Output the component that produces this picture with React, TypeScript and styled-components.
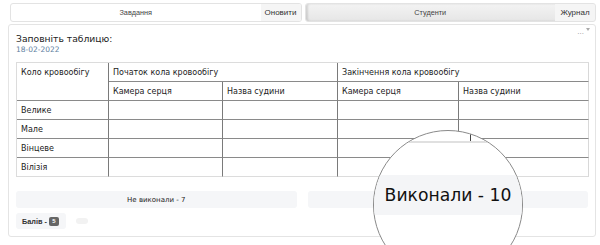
import React from "react";
import styled, { createGlobalStyle } from "styled-components";

const Global = createGlobalStyle`
  html, body { margin: 0; padding: 0; background: #fff; }
  body { font-family: "DejaVu Sans", Verdana, sans-serif; color: #222; }
`;

const Page = styled.div`
  position: relative;
  width: 600px;
  height: 245px;
  padding: 3px 4px 0 8px;
  box-sizing: border-box;
  overflow: hidden;
`;

const TabBar = styled.div`
  display: flex;
  gap: 3px;
  height: 19px;
  margin: 0 0 0 2px;
`;

const Segment = styled.div<{ $inset?: boolean }>`
  flex: 1;
  display: flex;
  border: 1px solid #e3e3e3;
  border-radius: 3px;
  overflow: hidden;
  background: ${(p) => (p.$inset ? "linear-gradient(#f3f3f3, #e6e6e6)" : "#fff")};
  box-shadow: ${(p) => (p.$inset ? "inset 2px 0 2px rgba(0,0,0,0.12)" : "none")};
`;

const TabLabel = styled.div`
  flex: 1;
  display: flex;
  align-items: center;
  justify-content: center;
  font-family: "Liberation Sans", Arial, sans-serif;
  font-size: 7.3px;
  color: #444;
`;

const TabButton = styled.div`
  width: 40px;
  display: flex;
  align-items: center;
  justify-content: center;
  background: #f5f5f5;
  font-family: "Liberation Sans", Arial, sans-serif;
  font-size: 8px;
  color: #333;
`;

const Card = styled.div`
  position: relative;
  margin-top: 2px;
  height: 213px;
  box-sizing: border-box;
  border: 1px solid #e4e4e4;
  border-radius: 3px;
  padding: 8px 7px 0 7px;
`;

const Menu = styled.div`
  position: absolute;
  right: 5px;
  top: 3px;
  display: flex;
  align-items: flex-start;
  gap: 2px;
  font-size: 7px;
  color: #999;
  line-height: 8px;
`;

const Caret = styled.span`
  width: 0;
  height: 0;
  border-left: 2.5px solid transparent;
  border-right: 2.5px solid transparent;
  border-top: 3px solid #aaa;
`;

const Title = styled.div`
  font-size: 9.2px;
  line-height: 12px;
  color: #222;
`;

const DateText = styled.div`
  font-size: 7.5px;
  line-height: 10px;
  color: #5f7f9f;
`;

const Table = styled.table`
  margin-top: 7px;
  width: 572px;
  table-layout: fixed;
  border-collapse: separate;
  border-spacing: 0;
  border-top: 1px solid #dcdcdc;
  border-left: 1px solid #dcdcdc;
  font-size: 8px;
  color: #222;

  td {
    height: 19px;
    padding: 0 0 0 4px;
    box-sizing: border-box;
    border-right: 1px solid #7a7a7a;
    border-bottom: 1px solid #8a8a8a;
    vertical-align: middle;
    white-space: nowrap;
  }
  td.last {
    border-right-color: #d8d8d8;
  }
  tbody tr:last-child td {
    border-bottom-color: #dcdcdc;
  }
  td.top {
    vertical-align: top;
    padding-top: 5px;
  }
`;

const ResultRow = styled.div`
  display: flex;
  gap: 11px;
  margin-top: 14px;
`;

const ResultButton = styled.div`
  flex: 1;
  height: 17px;
  display: flex;
  align-items: center;
  justify-content: center;
  background: #f5f6f8;
  border-radius: 3px;
  font-size: 7px;
  color: #222;
`;

const ScoreRow = styled.div`
  display: flex;
  align-items: center;
  gap: 10px;
  margin-top: 5px;
`;

const ScorePill = styled.div`
  height: 16px;
  display: flex;
  align-items: center;
  gap: 2px;
  padding: 0 7px 0 6px;
  background: #f5f6f8;
  border-radius: 3px;
  font-family: "Liberation Sans", Arial, sans-serif;
  font-weight: bold;
  font-size: 7.3px;
  color: #333;
`;

const Badge = styled.span`
  display: inline-flex;
  align-items: center;
  justify-content: center;
  width: 10px;
  height: 9px;
  border-radius: 2px;
  background: #666;
  color: #fff;
  font-size: 6px;
`;

const Faded = styled.div`
  width: 12px;
  height: 6px;
  border-radius: 3px;
  background: #f2f2f2;
`;

const Magnifier = styled.div`
  position: absolute;
  left: 373px;
  top: 130px;
  width: 150px;
  height: 150px;
  box-sizing: border-box;
  border-radius: 50%;
  border: 1px solid #8a8a8a;
  background: #fff;
  overflow: hidden;
  display: flex;
  flex-direction: column;
`;

const MagTop = styled.div`
  height: 10px;
  flex: none;
  border-bottom: 2px solid #e0e0e0;
  display: flex;
`;

const MagTick = styled.div`
  width: 1px;
  height: 100%;
  margin-left: 96px;
  background: #444;
`;

const MagBand = styled.div`
  margin-top: 32px;
  height: 40px;
  flex: none;
  background: #f4f5f7;
  display: flex;
  align-items: center;
  justify-content: center;
  font-size: 17.2px;
  color: #111;
`;

export default function App() {
  const rows = ["Велике", "Мале", "Вінцеве", "Вілізія"];
  return (
    <>
      <Global />
      <Page>
        <TabBar>
          <Segment>
            <TabLabel>Завдання</TabLabel>
            <TabButton>Оновити</TabButton>
          </Segment>
          <Segment $inset>
            <TabLabel>Студенти</TabLabel>
            <TabButton>Журнал</TabButton>
          </Segment>
        </TabBar>
        <Card>
          <Menu>
            <span>...</span>
            <Caret />
          </Menu>
          <Title>Заповніть таблицю:</Title>
          <DateText>18-02-2022</DateText>
          <Table>
            <colgroup>
              <col style={{ width: 92 }} />
              <col style={{ width: 114 }} />
              <col style={{ width: 115 }} />
              <col style={{ width: 121 }} />
              <col style={{ width: 130 }} />
            </colgroup>
            <thead>
              <tr>
                <td rowSpan={2} className="top">Коло кровообігу</td>
                <td colSpan={2}>Початок кола кровообігу</td>
                <td colSpan={2} className="last">Закінчення кола кровообігу</td>
              </tr>
              <tr>
                <td>Камера серця</td>
                <td>Назва судини</td>
                <td>Камера серця</td>
                <td className="last">Назва судини</td>
              </tr>
            </thead>
            <tbody>
              {rows.map((r) => (
                <tr key={r}>
                  <td>{r}</td>
                  <td></td>
                  <td></td>
                  <td></td>
                  <td className="last"></td>
                </tr>
              ))}
            </tbody>
          </Table>
          <ResultRow>
            <ResultButton>Не виконали - 7</ResultButton>
            <ResultButton aria-label="Виконали - 10" />
          </ResultRow>
          <ScoreRow>
            <ScorePill>
              Балів - <Badge>5</Badge>
            </ScorePill>
            <Faded />
          </ScoreRow>
        </Card>
        <Magnifier>
          <MagTop>
            <MagTick />
          </MagTop>
          <MagBand>Виконали - 10</MagBand>
        </Magnifier>
      </Page>
    </>
  );
}
